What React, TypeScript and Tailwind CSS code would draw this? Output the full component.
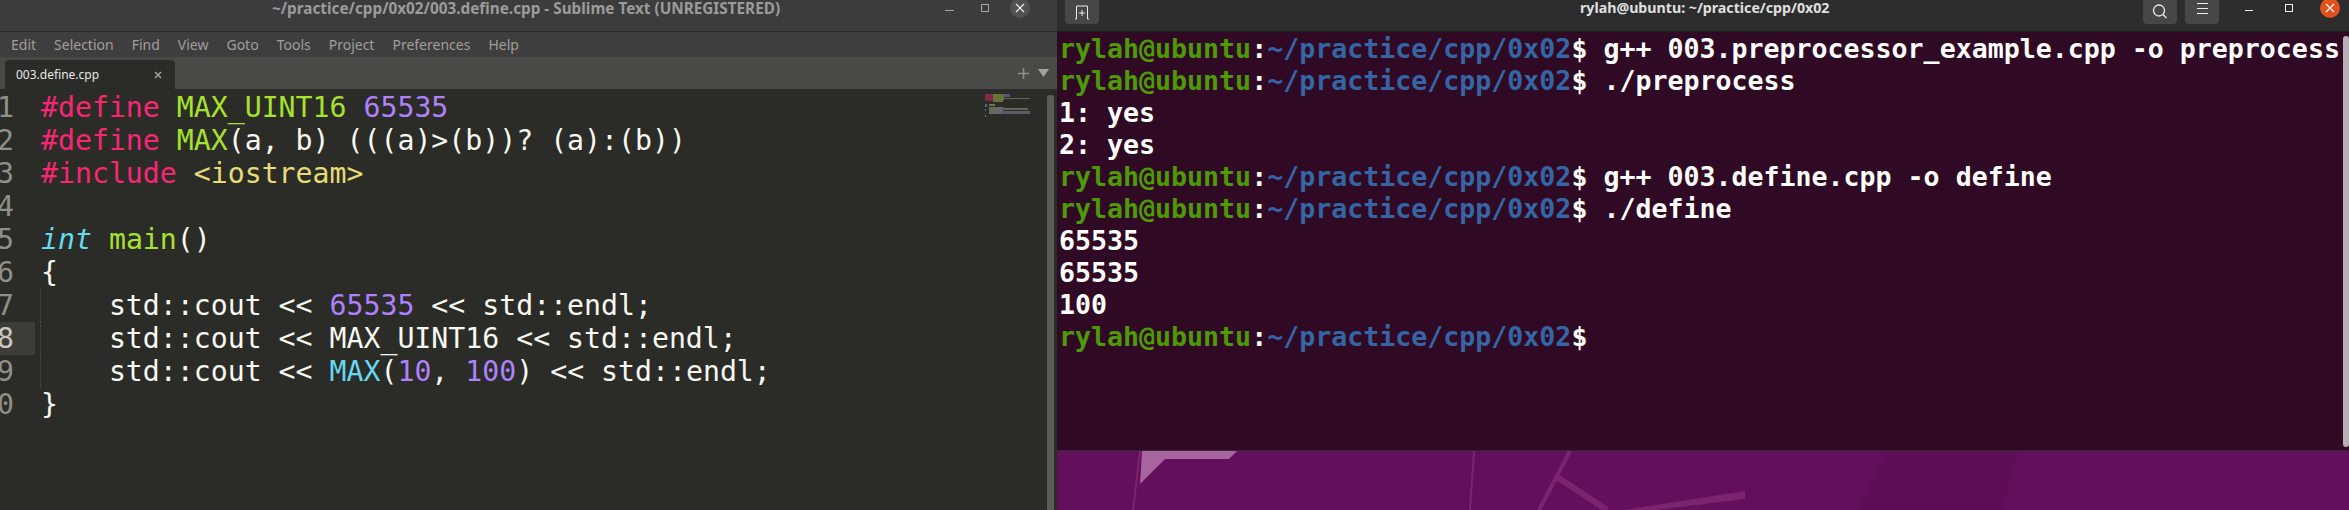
const mono = "font-['DejaVu_Sans_Mono',monospace]";

const menus = ["Edit", "Selection", "Find", "View", "Goto", "Tools", "Project", "Preferences", "Help"];

const P = "text-[#f92672]";
const G = "text-[#a6e22e]";
const V = "text-[#ae81ff]";
const Y = "text-[#e6db74]";
const C = "text-[#66d9ef]";

const code: React.ReactNode[] = [
  <><span className={P}>#define</span> <span className={G}>MAX_UINT16</span> <span className={V}>65535</span></>,
  <><span className={P}>#define</span> <span className={G}>MAX</span>(a, b) (((a)&gt;(b))? (a):(b))</>,
  <><span className={P}>#include</span> <span className={Y}>&lt;iostream&gt;</span></>,
  "",
  <><span className={`${C} italic`}>int</span> <span className={G}>main</span>()</>,
  "{",
  <>{"    std::cout << "}<span className={V}>65535</span>{" << std::endl;"}</>,
  "    std::cout << MAX_UINT16 << std::endl;",
  <>{"    std::cout << "}<span className={C}>MAX</span>(<span className={V}>10</span>, <span className={V}>100</span>){" << std::endl;"}</>,
  "}",
];

const Prompt = ({ cmd }: { cmd?: string }) => (
  <>
    <span className="text-[#4e9a06]">rylah@ubuntu</span>
    <span className="text-white">:</span>
    <span className="text-[#3465a4]">~/practice/cpp/0x02</span>
    <span className="text-white">$ {cmd}</span>
  </>
);

const terminal: React.ReactNode[] = [
  <Prompt cmd="g++ 003.preprocessor_example.cpp -o preprocess" />,
  <Prompt cmd="./preprocess" />,
  "1: yes",
  "2: yes",
  <Prompt cmd="g++ 003.define.cpp -o define" />,
  <Prompt cmd="./define" />,
  "65535",
  "65535",
  "100",
  <Prompt />,
];

const Minimap = () => (
  <svg width="46" height="24" className="mt-[2px] opacity-75">
    <rect x="0" y="1" width="8" height="7" fill="#9c2a58" />
    <rect x="8" y="1" width="11" height="6" fill="#7d8c3c" />
    <rect x="19" y="1" width="6" height="3" fill="#6f5f9c" />
    <rect x="19" y="5" width="26" height="1" fill="#77776f" />
    <rect x="8" y="7" width="10" height="2" fill="#8a8548" />
    <rect x="0" y="11" width="2" height="3" fill="#4d8a99" />
    <rect x="4" y="11" width="6" height="2" fill="#7d9c3c" />
    <rect x="0" y="16" width="1" height="2" fill="#888" />
    <rect x="4" y="14" width="13" height="7" fill="#7c7c76" />
    <rect x="17" y="14" width="2" height="7" fill="#6f5f9c" />
    <rect x="19" y="15" width="24" height="2" fill="#77776f" />
    <rect x="19" y="18" width="26" height="3" fill="#6d6d78" />
    <rect x="0" y="22" width="1" height="2" fill="#888" />
  </svg>
);

export default function App() {
  return (
    <div className="flex w-[2349px] h-[510px] overflow-hidden bg-[#2b2c27]">
      {/* sublime */}
      <div className="flex flex-col w-[1057px] shrink-0">
        <div className="flex items-start h-[32px] shrink-0 bg-[#3c3c3c] border-b border-[#2a2a2a] font-['Noto_Sans',sans-serif]">
          <div className="ml-[272px] w-[619px] -mt-[1px] text-[15.3px] leading-[18px] font-bold text-[#9b9b9b] whitespace-pre">
            ~/practice/cpp/0x02/003.define.cpp - Sublime Text (UNREGISTERED)
          </div>
          <div className="ml-[54px] mt-[10px] w-[9px] h-[1px] bg-[#a5a5a5]" />
          <div className="ml-[27px] mt-[4px] w-[8px] h-[8px] border border-[#a5a5a5]" />
          <div className="ml-[21px] -mt-[2px] w-[20px] h-[20px] rounded-full bg-[#515151] flex items-center justify-center">
            <svg width="10" height="10" viewBox="0 0 10 10" stroke="#f0f0f0" strokeWidth="1.2">
              <path d="M1 1l8 8M9 1l-8 8" />
            </svg>
          </div>
        </div>
        <div className="flex items-center gap-[18px] pl-[11px] h-[25px] shrink-0 bg-[#3e3e3e] text-[14px] text-[#a09f9c] font-['Noto_Sans',sans-serif]">
          {menus.map((m) => (
            <span key={m}>{m}</span>
          ))}
        </div>
        <div className="flex items-end h-[32px] shrink-0 pl-[5px] pr-[8px] bg-[#494a45]">
          <div className="flex items-center justify-between w-[170px] h-[29px] pl-[11px] pr-[13px] rounded-t-[4px] bg-[#2b2c27] text-[12px] text-[#e6e6e6] font-['Noto_Sans',sans-serif]">
            <span>003.define.cpp</span>
            <svg width="8" height="8" viewBox="0 0 8 8" stroke="#a0a09c" strokeWidth="1.6">
              <path d="M1 1l6 6M7 1l-6 6" />
            </svg>
          </div>
          <div className="flex items-center gap-[9px] ml-auto h-[32px]">
            <svg width="11" height="11" viewBox="0 0 11 11" stroke="#8d8e89" strokeWidth="1.6">
              <path d="M5.5 0v11M0 5.5h11" />
            </svg>
            <svg width="11" height="8" viewBox="0 0 11 8" fill="#a2a39e">
              <path d="M0 0h11L5.5 8z" />
            </svg>
          </div>
        </div>
        <div className={`flex flex-1 min-h-0 pt-[2px] bg-[#2b2c27] text-[28.2px] leading-[33px] text-[#f8f8f2] ${mono}`}>
          <div className="flex-1 min-w-0 overflow-hidden">
            {code.map((line, i) => (
              <div key={i} className="flex h-[33px] whitespace-pre">
                <div className={`w-[35px] shrink-0 overflow-hidden ${i === 7 ? "bg-[#3c3d36] text-[#c8c8c2]" : "text-[#8f908a]"}`}>
                  <span className="block -ml-[3px]">{(i + 1) % 10}</span>
                </div>
                <div className={`ml-[5px] ${i >= 6 && i <= 8 ? "border-l border-dotted border-[#55564f]" : "border-l border-transparent"}`}>
                  {line}
                </div>
              </div>
            ))}
          </div>
          <div className="w-[62px] shrink-0">
            <Minimap />
          </div>
          <div className="w-[7px] shrink-0 mt-[4px] rounded-t-[3px] bg-[#5b5c57]" />
          <div className="w-[3px] shrink-0" />
        </div>
      </div>

      {/* terminal */}
      <div className="flex flex-col flex-1 min-w-0">
        <div className="flex items-start h-[32px] shrink-0 bg-[#2d2d2d] border-b border-[#1f1f1f] font-['Noto_Sans',sans-serif]">
          <div className="ml-[8px] w-[34px] h-[24px] rounded-b-[4px] bg-[#474747] flex items-center justify-center">
            <svg width="16" height="16" viewBox="0 0 16 16" fill="none" stroke="#ececec" strokeWidth="1">
              <path d="M1 15h1.5V2h11v13H15M8 6v6M5 9h6" />
            </svg>
          </div>
          <div className="ml-[481px] -mt-[1px] w-[563px] text-[14.2px] leading-[18px] font-bold text-[#e0e0e0] whitespace-pre">
            rylah@ubuntu: ~/practice/cpp/0x02
          </div>
          <div className="w-[34px] h-[24px] rounded-b-[4px] bg-[#474747] flex items-center justify-center">
            <svg width="16" height="16" viewBox="0 0 16 16" fill="none" stroke="#ececec" strokeWidth="1.3">
              <circle cx="7" cy="6.5" r="5.5" />
              <path d="M11 10.5l3.5 3.5" />
            </svg>
          </div>
          <div className="ml-[8px] w-[34px] h-[24px] rounded-b-[4px] bg-[#474747] flex flex-col items-center justify-start gap-[4px] pt-[3px]">
            <div className="w-[11px] h-[1px] bg-[#ececec]" />
            <div className="w-[11px] h-[1px] bg-[#ececec]" />
            <div className="w-[11px] h-[1px] bg-[#ececec]" />
          </div>
          <div className="ml-[26px] mt-[10px] w-[8px] h-[1px] bg-[#ececec]" />
          <div className="ml-[32px] mt-[4px] w-[8px] h-[8px] border border-[#ececec]" />
          <div className="ml-[27px] -mt-[2px] w-[20px] h-[20px] rounded-full bg-[#e2501d] flex items-center justify-center">
            <svg width="10" height="10" viewBox="0 0 10 10" stroke="#fff" strokeWidth="1.2">
              <path d="M1 1l8 8M9 1l-8 8" />
            </svg>
          </div>
        </div>
        <div className={`flex h-[418px] shrink-0 pt-[1px] bg-[#300a24] text-[26.6px] leading-[32px] font-bold text-white ${mono}`}>
          <div className="flex-1 min-w-0 pl-[2px] overflow-hidden whitespace-pre">
            {terminal.map((line, i) => (
              <div key={i} className="h-[32px]">{line}</div>
            ))}
          </div>
          <div className="w-[6px] shrink-0 mt-[3px] mb-[3px] rounded-[3px] bg-[#b5b1b4]" />
        </div>
        <div className="flex-1 border-t border-[#2c2c2c] bg-[#630f5c]">
          <svg width="1292" height="59" className="block">
            <path d="M830 0h130l-15 59H800z" fill="#5e0e57" />
            <path d="M85 0h95l-8 8h-64l-25 25z" fill="#a8649f" />
            <path d="M83 0L76 59" stroke="#7d2470" strokeWidth="2" />
            <path d="M417 0l-4 59" stroke="#7d2470" strokeWidth="2" />
            <path d="M513 0L482 59" stroke="#7d2470" strokeWidth="4" />
            <path d="M500 26l50 33" stroke="#7d2470" strokeWidth="6" />
            <path d="M567 59l121-19v8l-90 11z" fill="#7d2470" />
          </svg>
        </div>
      </div>
    </div>
  );
}
